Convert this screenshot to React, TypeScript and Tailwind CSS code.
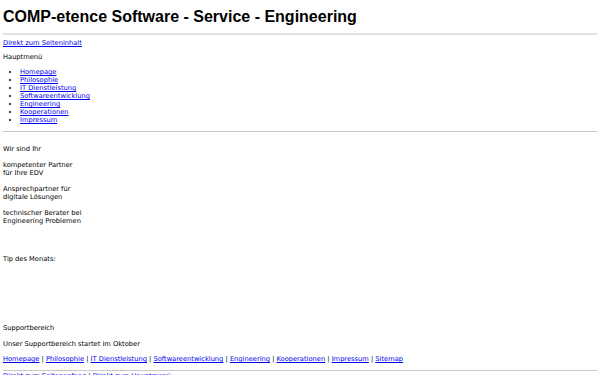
export default function App() {
  const menu = [
    'Homepage',
    'Philosophie',
    'IT Dienstleistung',
    'Softwareentwicklung',
    'Engineering',
    'Kooperationen',
    'Impressum',
  ]
  const footer = [...menu, 'Sitemap']

  return (
    <div className="min-h-[375px] bg-white px-[3px] text-[6.7px] leading-[8px] text-black [font-family:'DejaVu_Sans',sans-serif]">
      {/* Header */}
      <h1 className="pt-[8px] text-[16px] leading-[17px] font-bold [font-family:'Liberation_Sans',sans-serif]">
        COMP-etence Software - Service - Engineering
      </h1>
      <hr className="mt-[8px] border-t-2 border-[#e0e0e0]" />

      <a href="#" className="mt-[4px] block text-[#0000ee] underline">Direkt zum Seiteninhalt</a>

      {/* Navigation */}
      <p className="mt-[6px]">Hauptmenü</p>
      <ul className="mt-[7px] list-disc pl-[17px]">
        {menu.map((item) => (
          <li key={item}>
            <a href="#" className="text-[#0000ee] underline">{item}</a>
          </li>
        ))}
      </ul>
      <hr className="mt-[7px] border-t border-[#c8c8c8]" />

      {/* Content */}
      <div className="mt-[13px] space-y-[8px]">
        <p>Wir sind Ihr</p>
        <p>kompetenter Partner<br />für Ihre EDV</p>
        <p>Ansprechpartner für<br />digitale Lösungen</p>
        <p>technischer Berater bei<br />Engineering Problemen</p>
      </div>

      <p className="mt-[30px]">Tip des Monats:</p>

      <p className="mt-[61px]">Supportbereich</p>
      <p className="mt-[8px]">Unser Supportbereich startet im Oktober</p>

      {/* Footer */}
      <p className="mt-[7px]">
        {footer.map((item, i) => (
          <span key={item}>
            {i > 0 && ' | '}
            <a href="#" className="text-[#0000ee] underline">{item}</a>
          </span>
        ))}
      </p>
      <hr className="mt-[7px] border-t border-[#c8c8c8]" />
      <p className="mt-[1px]">
        <a href="#" className="text-[#0000ee] underline">Direkt zum Seitenanfang</a>
        {' | '}
        <a href="#" className="text-[#0000ee] underline">Direkt zum Hauptmenü</a>
      </p>
    </div>
  )
}
